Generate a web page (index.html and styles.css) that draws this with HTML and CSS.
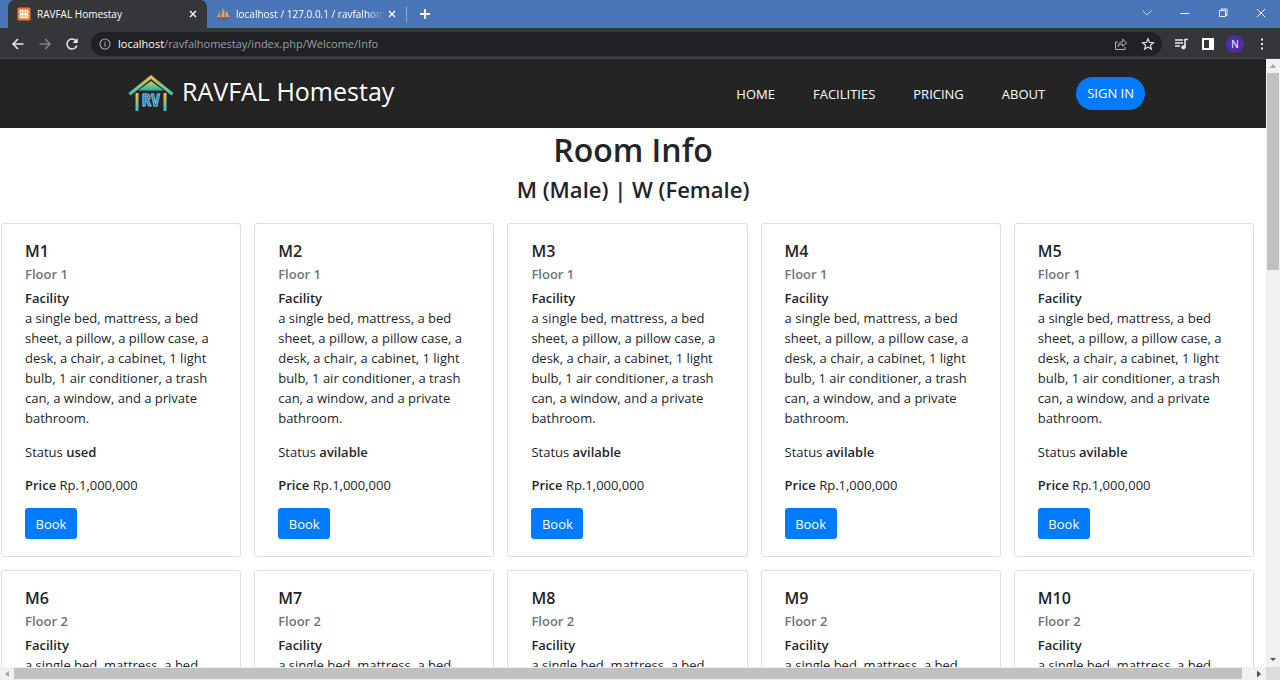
FILE: index.html
```html
<!DOCTYPE html>
<html lang="en">
<head>
<meta charset="utf-8">
<title>RAVFAL Homestay</title>
<link rel="stylesheet" href="styles.css">
</head>
<body>
<div class="browser">
  <div class="tabs">
    <div class="tab tab-active">
      <svg class="favicon" viewBox="0 0 14 14"><rect x="0.5" y="0.5" width="13" height="13" rx="1.500" fill="#ef7b30"/><path d="M5 3.500H9M5 10.500H9M5.500 7h3" stroke="#fff" stroke-width="1.300"/><rect x="3" y="3.500" width="3" height="3" rx="1.300" fill="none" stroke="#fff" stroke-width="1.300"/><rect x="8" y="3.500" width="3" height="3" rx="1.300" fill="none" stroke="#fff" stroke-width="1.300"/><rect x="3" y="7.500" width="3" height="3" rx="1.300" fill="none" stroke="#fff" stroke-width="1.300"/><rect x="8" y="7.500" width="3" height="3" rx="1.300" fill="none" stroke="#fff" stroke-width="1.300"/><path d="M6.700 2.500h0.700v2H6.700zM6.700 9.500h0.700v2H6.700z" fill="#ef7b30"/></svg>
      <span class="tab-title">RAVFAL Homestay</span>
      <button class="tab-close" aria-label="Close tab"><svg viewBox="0 0 8 8" width="8" height="8"><path d="M1 1l6 6M7 1L1 7" stroke="#fff" stroke-width="1.400"/></svg></button>
    </div>
    <div class="tab">
      <svg class="favicon" viewBox="0 0 14 14"><path d="M1 10C2.500 8 3.500 5 3.800 3V10zM5 10C6 7 6.700 4 6.500 0.500C8.500 4 8.800 7 8.500 10zM9.500 10C10 7.500 10 5 9.500 3C11.500 5 12.500 7.500 13 10z" fill="#f3a647"/><path d="M1 11.500h12M2 13h10" stroke="#5c5d83" stroke-width="1.200" stroke-dasharray="2 0.600"/></svg>
      <span class="tab-title tab-title-fade">localhost / 127.0.0.1 / ravfalhomestay</span>
      <button class="tab-close" aria-label="Close tab"><svg viewBox="0 0 8 8" width="8" height="8"><path d="M1 1l6 6M7 1L1 7" stroke="#fff" stroke-width="1.400"/></svg></button>
    </div>
    <button class="new-tab" aria-label="New tab"><svg viewBox="0 0 12 12" width="12" height="12"><path d="M6 1v10M1 6h10" stroke="#fff" stroke-width="1.800"/></svg></button>
    <div class="window-controls">
      <button aria-label="Search tabs"><svg viewBox="0 0 12 12" width="12" height="12"><path d="M1.500 3.500L6 8l4.500-4.500" fill="none" stroke="#c5d5ec"/></svg></button>
      <button aria-label="Minimize"><svg viewBox="0 0 12 12" width="12" height="12"><path d="M1.500 6.500h9" stroke="#fff"/></svg></button>
      <button aria-label="Restore"><svg viewBox="0 0 12 12" width="12" height="12"><path d="M2.500 3.500h6v6h-6zM4 3.500l0-1.500h6v6.500h-1.500" fill="none" stroke="#e4ecf7"/></svg></button>
      <button aria-label="Close window"><svg viewBox="0 0 12 12" width="12" height="12"><path d="M2 2l8 8M10 2l-8 8" stroke="#fff"/></svg></button>
    </div>
  </div>

  <div class="toolbar">
    <button aria-label="Back"><svg viewBox="0 0 14 14" width="14" height="14"><path d="M12.500 7H2.500M7 2L2 7l5 5" fill="none" stroke="#e8eaed" stroke-width="1.500"/></svg></button>
    <button aria-label="Forward"><svg viewBox="0 0 14 14" width="14" height="14"><path d="M1.500 7h10M7 2l5 5-5 5" fill="none" stroke="#808387" stroke-width="1.500"/></svg></button>
    <button aria-label="Reload"><svg viewBox="0 0 14 14" width="14" height="14"><path d="M11.800 8.500A5 5 0 1 1 10.500 3.400L12 5" fill="none" stroke="#e8eaed" stroke-width="1.500"/><path d="M12.700 1v5h-5z" fill="#e8eaed"/></svg></button>
    <div class="address">
      <svg viewBox="0 0 12 12" width="12" height="12"><circle cx="6" cy="6" r="5" fill="none" stroke="#a5a8ad" stroke-width="1.100"/><path d="M6 5.300v3.200M6 3.200v1.200" stroke="#a5a8ad" stroke-width="1.200"/></svg>
      <span class="url"><span class="url-host">localhost</span>/ravfalhomestay/index.php/Welcome/Info</span>
      <button aria-label="Share"><svg viewBox="0 0 14 14" width="14" height="14"><path d="M4 5H1.500v7.500H11V10M4 9.500C4.300 6.500 6 5 8.700 4.800V2.200L12.700 6 8.700 9.300V7C6.500 7 5 7.800 4 9.500z" fill="none" stroke="#b4b7bb"/></svg></button>
      <button aria-label="Bookmark"><svg viewBox="0 0 14 14" width="14" height="14"><path d="M7 1.800l1.500 3.600 3.900.3-3 2.500 1 3.900L7 10l-3.400 2.100 1-3.900-3-2.500 3.900-.3z" fill="none" stroke="#dadce0" stroke-width="1.200"/></svg></button>
    </div>
    <button aria-label="Media controls"><svg viewBox="0 0 14 14" width="14" height="14"><path d="M1 3h8M1 6h8M1 9h5" stroke="#e8eaed" stroke-width="1.500"/><path d="M11 10V2.500h3" fill="none" stroke="#e8eaed" stroke-width="1.600"/><circle cx="9.500" cy="10.300" r="2.100" fill="#e8eaed"/></svg></button>
    <button aria-label="Side panel"><svg viewBox="0 0 14 14" width="14" height="14"><path d="M1 1h12v12H1zM3 3v8h5V3z" fill="#fff" fill-rule="evenodd"/></svg></button>
    <button class="avatar" aria-label="Profile">N</button>
    <button aria-label="Menu"><svg viewBox="0 0 14 14" width="14" height="14"><path d="M6 1.500h2v2H6zM6 6h2v2H6zM6 10.500h2v2H6z" fill="#e8eaed"/></svg></button>
  </div>

  <div class="viewport">
    <div class="page">
      <header class="navbar">
        <a class="brand" href="#">
          <svg viewBox="0 0 48 40" width="48" height="40">
            <defs><linearGradient id="roof" x1="0" y1="0" x2="0" y2="1"><stop offset="0" stop-color="#f1c23f"/><stop offset="1" stop-color="#35c0c7"/></linearGradient>
            <linearGradient id="gable" x1="0" y1="0" x2="0" y2="1"><stop offset="0" stop-color="#e8c53f"/><stop offset="1" stop-color="#12b9b0"/></linearGradient></defs>
            <path d="M1.500 20L24 2l22.500 18-2 2.500L24 6 3.500 22.500z" fill="url(#roof)"/>
            <path d="M24 8L37 17.500H11z" fill="url(#gable)"/>
            <path d="M8.500 20h3v18h-3z" fill="url(#roof)"/><path d="M36.500 20h3v18h-3z" fill="url(#roof)"/>
            <text class="logo-text" x="24" y="33" text-anchor="middle">RV</text>
          </svg>
          <span>RAVFAL Homestay</span>
        </a>
        <nav class="nav-links">
          <a href="#">HOME</a><a href="#">FACILITIES</a><a href="#">PRICING</a><a href="#">ABOUT</a>
        </nav>
        <a class="sign-in" href="#">SIGN IN</a>
      </header>
      <main>
        <h1>Room Info</h1>
        <h2>M (Male) | W (Female)</h2>
        <div class="rooms" id="rooms"></div>
      </main>
    </div>
    <div class="scroll-y"><svg viewBox="0 0 14 14" width="14" height="14"><path d="M4 9l3-4 3 4z" fill="#a3a3a3"/></svg><div class="thumb-y"></div><svg class="scroll-end" viewBox="0 0 14 14" width="14" height="14"><path d="M4 5l3 3 3-3z" fill="#505050"/></svg></div>
    <div class="scroll-x"><svg viewBox="0 0 14 14" width="14" height="14"><path d="M9 4L5 7l4 3z" fill="#a3a3a3"/></svg><div class="thumb-x"></div><svg class="scroll-end" viewBox="0 0 14 14" width="14" height="14"><path d="M5 3.500L9 7l-4 3.500z" fill="#505050"/></svg></div>
    <div class="scroll-corner"></div>
  </div>
</div>
<script src="rooms.js"></script>
</body>
</html>
```
FILE: styles.css
```css
* { box-sizing: border-box; }
body { margin: 0; font-family: "Open Sans", "Noto Sans", sans-serif; font-size: 13px; line-height: 20px; color: #212529; }
h1, h2, h3, h4, p { margin: 0; }
h1, h2, h3, h4, strong { font-weight: 600; }
a { text-decoration: none; }
button { font: inherit; border: 0; padding: 0; background: none; color: inherit; }
svg { display: block; flex: none; }

.browser { display: flex; flex-direction: column; height: 100vh; overflow: hidden; }

.tabs { display: flex; flex: none; height: 28px; padding-left: 8px; background: #4a76b7; }
.tab { display: flex; align-items: center; width: 199px; padding: 0 7px 0 9px; color: #fff; font-size: 10px; }
.tab-active { background: #35363a; border-radius: 7px 7px 0 0; }
.favicon { width: 14px; height: 14px; }
.tab-title { flex: 1; margin-left: 6px; overflow: hidden; white-space: nowrap; }
.tab-title-fade { mask-image: linear-gradient(to right, #000 88%, transparent); }
.tab-close { width: 14px; height: 14px; display: grid; place-items: center; }
.new-tab { display: grid; place-items: center; width: 36px; height: 16px; margin-top: 6px; border-left: 1px solid #8faad3; }
.window-controls { display: flex; margin-left: auto; }
.window-controls button { display: grid; place-items: center; width: 38px; height: 26px; }

.toolbar { display: flex; flex: none; align-items: center; gap: 13px; height: 31px; padding: 1px 11px 0; background: #35363a; border-bottom: 1px solid #4a4b4e; }
.address { display: flex; flex: 1; align-items: center; gap: 13px; height: 24px; padding: 0 7px 0 8px; margin: 0 -1px; border-radius: 12px; background: #202124; }
.url { flex: 1; margin-left: -6px; font-size: 11px; color: #9aa0a6; }
.url-host { color: #fff; }
.avatar { width: 18px; height: 18px; margin: 0 -2px; border-radius: 50%; background: #512da8; color: #fff; font-size: 10px; line-height: 18px; }

.viewport { display: grid; flex: 1; min-height: 0; grid-template: minmax(0, 1fr) 13px / minmax(0, 1fr) 14px; }
.page { overflow: hidden; background: #fff; }
.navbar { display: flex; align-items: center; height: 69px; padding: 0 121px 0 127px; background: #242424; }
.brand { display: flex; align-items: center; gap: 7px; color: #fff; font-size: 25px; line-height: 36px; padding-bottom: 6px; }
.brand svg { margin-top: 4px; }
.logo-text { font: bold 15px "DejaVu Sans Mono", monospace; fill: #1f5f94; stroke: #79cbe8; stroke-width: 1; }
.nav-links { display: flex; gap: 38px; margin-left: auto; }
.nav-links a { color: #fff; }
.sign-in { margin-left: 31px; padding: 6px 11px; border-radius: 17px; background: #007bff; color: #fff; line-height: 21px; }

h1 { padding-top: 2px; font-size: 32px; line-height: 40px; text-align: center; }
h2 { margin-top: 5px; font-size: 22px; line-height: 28px; text-align: center; }
.rooms { display: grid; grid-template-columns: repeat(5, 1fr); gap: 13px; padding: 20px 12px 14px 1px; }
.card { padding: 17px 23px; border: 1px solid #dfdfdf; border-radius: 3px; }
.card h3 { font-size: 16px; line-height: 20px; }
.card h4 { margin: 4px 0 5px; font-size: 13px; line-height: 18px; color: #6c757d; }
.card p { margin-bottom: 13px; }
.card .details { margin-bottom: 14px; }
.book { width: 52px; height: 31px; border-radius: 3px; background: #007bff; color: #fff; }
.card .book { display: block; }

.scroll-y { display: flex; flex-direction: column; background: #f1f1f1; }
.thumb-y { height: 197px; margin: 0 1px; background: #c1c1c1; }
.scroll-x { display: flex; background: #f1f1f1; }
.thumb-x { width: 97%; height: 11px; margin-top: 1px; background: #c1c1c1; }
.scroll-y .scroll-end { margin-top: auto; }
.scroll-x .scroll-end { margin-left: auto; }
.scroll-corner { background: #dcdcdc; }
```
FILE: rooms.js
```js
const list = document.getElementById("rooms");
for (let n = 1; n <= 10; n++) {
  const card = document.createElement("article");
  card.className = "card";
  card.innerHTML = `
    <h3>M${n}</h3>
    <h4>Floor ${n <= 5 ? 1 : 2}</h4>
    <p class="details"><strong>Facility</strong><br>a single bed, mattress, a bed sheet, a pillow, a pillow case, a desk, a chair, a cabinet, 1 light bulb, 1 air conditioner, a trash can, a window, and a private bathroom.</p>
    <p>Status <strong>${n === 1 ? "used" : "avilable"}</strong></p>
    <p><strong>Price</strong> Rp.1,000,000</p>
    <button class="book">Book</button>`;
  list.append(card);
}
```
